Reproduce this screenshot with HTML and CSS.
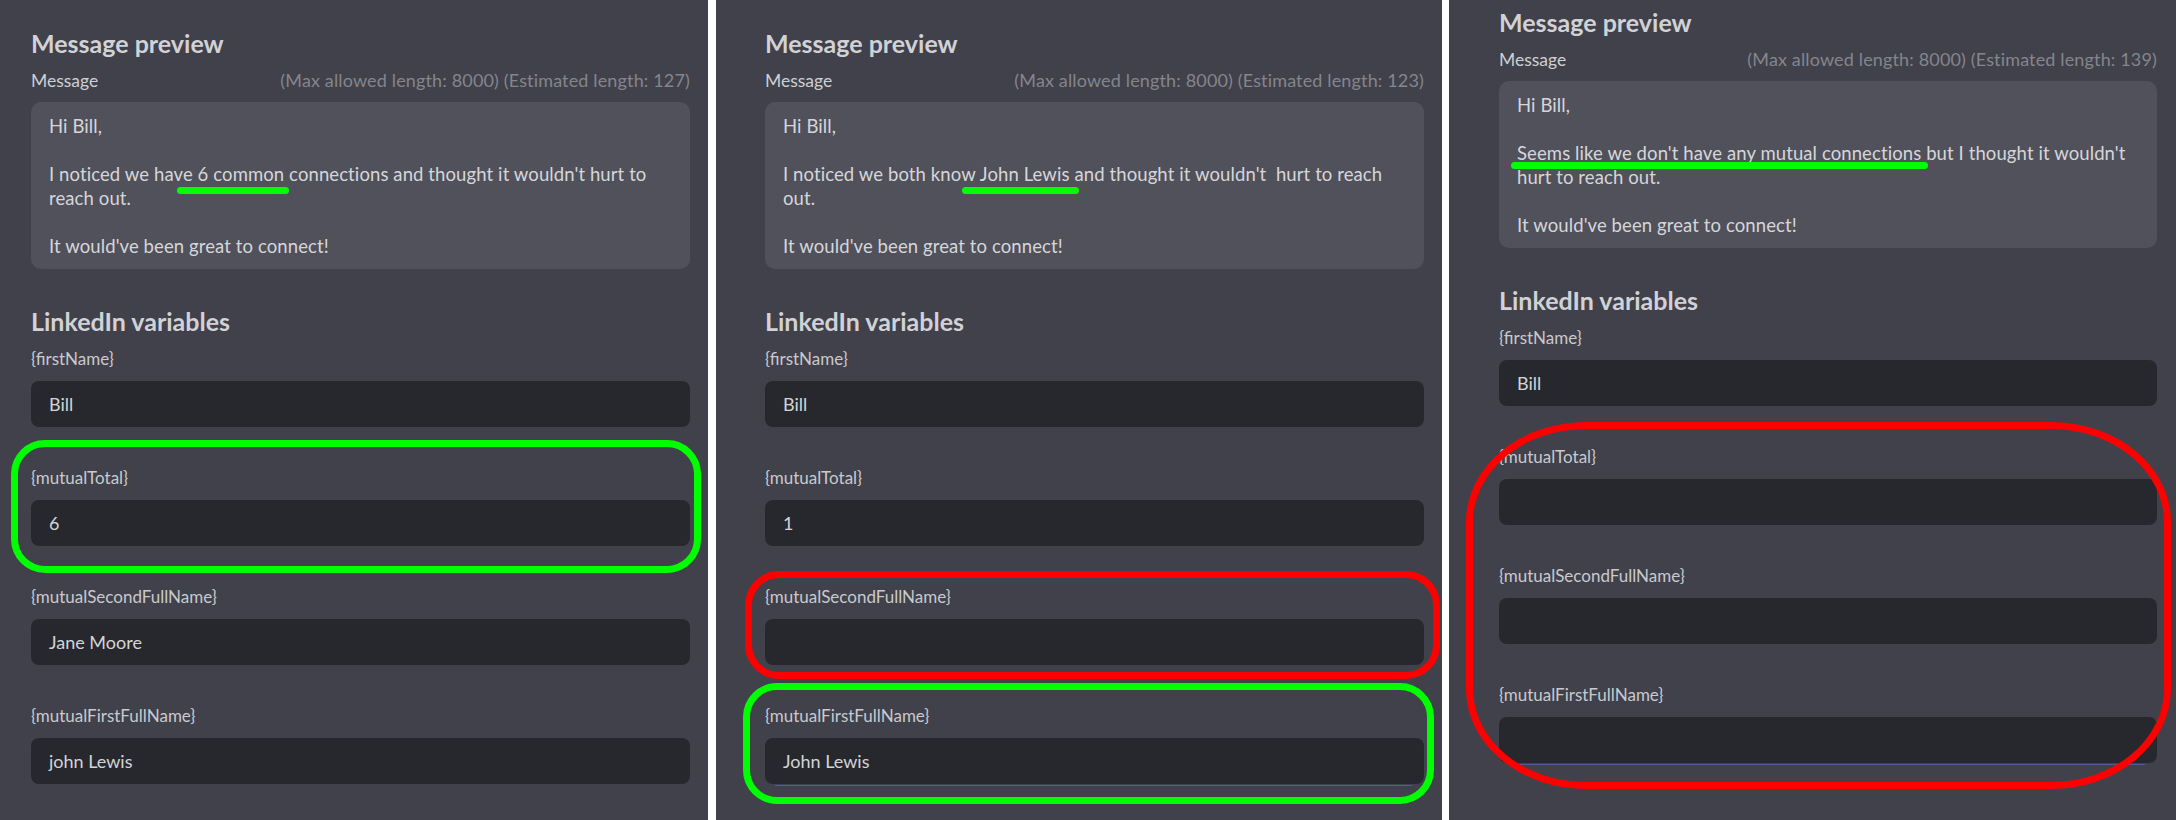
FILE: index.html
```html
<!DOCTYPE html>
<html lang="en">
<head>
  <meta charset="UTF-8" />
  <meta name="viewport" content="width=device-width, initial-scale=1.0"/>
  <title>Message preview variants</title>
  <link rel="stylesheet" href="styles.css">
</head>
<body>

  <!-- Variant 1: all mutual variables filled -->
  <section class="panel panel--first">
    <h2 class="section-title">Message preview</h2>
    <div class="message-head">
      <span class="message-label">Message</span>
      <span class="message-meta">(Max allowed length: 8000) (Estimated length: 127)</span>
    </div>
    <div class="message-box">
      <p>Hi Bill,</p>
      <p>I noticed we have <span class="mark mark--total">6 common</span> connections and thought it wouldn't hurt to reach out.</p>
      <p>It would've been great to connect!</p>
    </div>

    <h2 class="section-title section-title--vars">LinkedIn variables</h2>
    <div class="field">
      <div class="field-label">{firstName}</div>
      <div class="field-input">Bill</div>
    </div>
    <div class="field">
      <div class="field-label">{mutualTotal}</div>
      <div class="field-input">6</div>
      <div class="ring ring--green ring--total"></div>
    </div>
    <div class="field">
      <div class="field-label">{mutualSecondFullName}</div>
      <div class="field-input">Jane Moore</div>
    </div>
    <div class="field">
      <div class="field-label">{mutualFirstFullName}</div>
      <div class="field-input">john Lewis</div>
    </div>
  </section>

  <!-- Variant 2: one mutual connection -->
  <section class="panel panel--second">
    <h2 class="section-title">Message preview</h2>
    <div class="message-head">
      <span class="message-label">Message</span>
      <span class="message-meta">(Max allowed length: 8000) (Estimated length: 123)</span>
    </div>
    <div class="message-box">
      <p>Hi Bill,</p>
      <p>I noticed we both know <span class="mark mark--name">John Lewis</span> and thought it wouldn't&nbsp; hurt to reach out.</p>
      <p>It would've been great to connect!</p>
    </div>

    <h2 class="section-title section-title--vars">LinkedIn variables</h2>
    <div class="field">
      <div class="field-label">{firstName}</div>
      <div class="field-input">Bill</div>
    </div>
    <div class="field">
      <div class="field-label">{mutualTotal}</div>
      <div class="field-input">1</div>
    </div>
    <div class="field">
      <div class="field-label">{mutualSecondFullName}</div>
      <div class="field-input"></div>
      <div class="ring ring--red ring--second"></div>
    </div>
    <div class="field">
      <div class="field-label">{mutualFirstFullName}</div>
      <div class="field-input field-input--focus">John Lewis</div>
      <div class="ring ring--green ring--first"></div>
    </div>
  </section>

  <!-- Variant 3: no mutual connections -->
  <section class="panel panel--third">
    <h2 class="section-title">Message preview</h2>
    <div class="message-head">
      <span class="message-label">Message</span>
      <span class="message-meta">(Max allowed length: 8000) (Estimated length: 139)</span>
    </div>
    <div class="message-box">
      <p>Hi Bill,</p>
      <p><span class="mark mark--none">Seems like we don't have any mutual connections</span> but I thought it wouldn't hurt to reach out.</p>
      <p>It would've been great to connect!</p>
    </div>

    <h2 class="section-title section-title--vars">LinkedIn variables</h2>
    <div class="field">
      <div class="field-label">{firstName}</div>
      <div class="field-input">Bill</div>
    </div>
    <div class="field-group">
      <div class="field">
        <div class="field-label">{mutualTotal}</div>
        <div class="field-input"></div>
      </div>
      <div class="field">
        <div class="field-label">{mutualSecondFullName}</div>
        <div class="field-input"></div>
      </div>
      <div class="field field--last">
        <div class="field-label">{mutualFirstFullName}</div>
        <div class="field-input field-input--focus"></div>
      </div>
      <div class="ring ring--red ring--group"></div>
    </div>
  </section>

</body>
</html>
```

FILE: styles.css
```css
* {
  margin: 0;
  padding: 0;
  box-sizing: border-box;
  font-family: 'Lato', 'Open Sans', sans-serif;
}

body {
  display: flex;
  width: 2176px;
  height: 820px;
  overflow: hidden;
  background: #ffffff;
}

/* Panels */
.panel {
  height: 820px;
  overflow: hidden;
  background: #40414a;
  color: #cfcfd4;
}

.panel--first {
  width: 708px;
  padding: 29px 18px 0 31px;
}

.panel--second {
  width: 726px;
  margin-left: 8px;
  padding: 29px 18px 0 49px;
}

.panel--third {
  width: 727px;
  margin-left: 7px;
  padding: 8px 19px 0 50px;
}

.section-title {
  font-size: 25px;
  line-height: 28px;
  font-weight: 700;
  color: #d2d2d6;
  margin-bottom: 12px;
}

.section-title--vars {
  margin-bottom: 14px;
}

/* Message preview */
.message-head {
  display: flex;
  justify-content: space-between;
  align-items: baseline;
  line-height: 22px;
  margin-bottom: 10px;
}

.message-label {
  font-size: 17.5px;
  color: #cfcfd4;
}

.message-meta {
  font-size: 18px;
  letter-spacing: 0.15px;
  color: #85858d;
}

.message-box {
  background: #50515a;
  border-radius: 10px;
  padding: 12px 16px 11px 18px;
  margin-bottom: 38px;
  font-size: 18.5px;
  letter-spacing: 0.1px;
  line-height: 24px;
  color: #d6d6da;
}

.message-box p + p {
  margin-top: 24px;
}

/* highlighter strokes drawn over the screenshot */
.mark {
  position: relative;
}

.mark::after {
  content: "";
  position: absolute;
  height: 7px;
  border-radius: 4px;
  background: #00ff00;
}

.mark--total::after { left: -21px; right: -5px; bottom: -9px; }
.mark--name::after { left: -18px; right: -9px; bottom: -9px; }
.mark--none::after { left: -6px; right: -7px; bottom: -5px; }

/* Variable fields */
.field {
  position: relative;
  margin-bottom: 41px;
}

.field--last {
  margin-bottom: 0;
}

.field-group {
  position: relative;
}

.field-label {
  font-size: 17px;
  line-height: 20px;
  color: #c9c9ce;
  margin-bottom: 12px;
}

.field-input {
  position: relative;
  display: flex;
  align-items: center;
  height: 46px;
  padding: 0 18px;
  border-radius: 8px;
  background: #27282d;
  font-size: 18px;
  color: #d4d4d8;
}

.field-input--focus::after {
  content: "";
  position: absolute;
  left: 10px;
  right: 12px;
  bottom: -2px;
  height: 1px;
  background: #4a5d94;
}

/* Annotation rings */
.ring {
  position: absolute;
  border: 7px solid;
  pointer-events: none;
}

.ring--green { border-color: #00ff00; }
.ring--red { border-color: #ff0000; }

.ring--total {
  top: -28px;
  bottom: -27px;
  left: -20px;
  right: -11px;
  border-radius: 34px;
}

.ring--second {
  top: -16px;
  bottom: -14px;
  left: -20px;
  right: -16px;
  border-radius: 34px;
}

.ring--first {
  top: -23px;
  bottom: -20px;
  left: -22px;
  right: -10px;
  border-radius: 34px;
}

.ring--group {
  top: -25px;
  bottom: -26px;
  left: -33px;
  right: -14px;
  border-radius: 120px / 100px;
}
```
